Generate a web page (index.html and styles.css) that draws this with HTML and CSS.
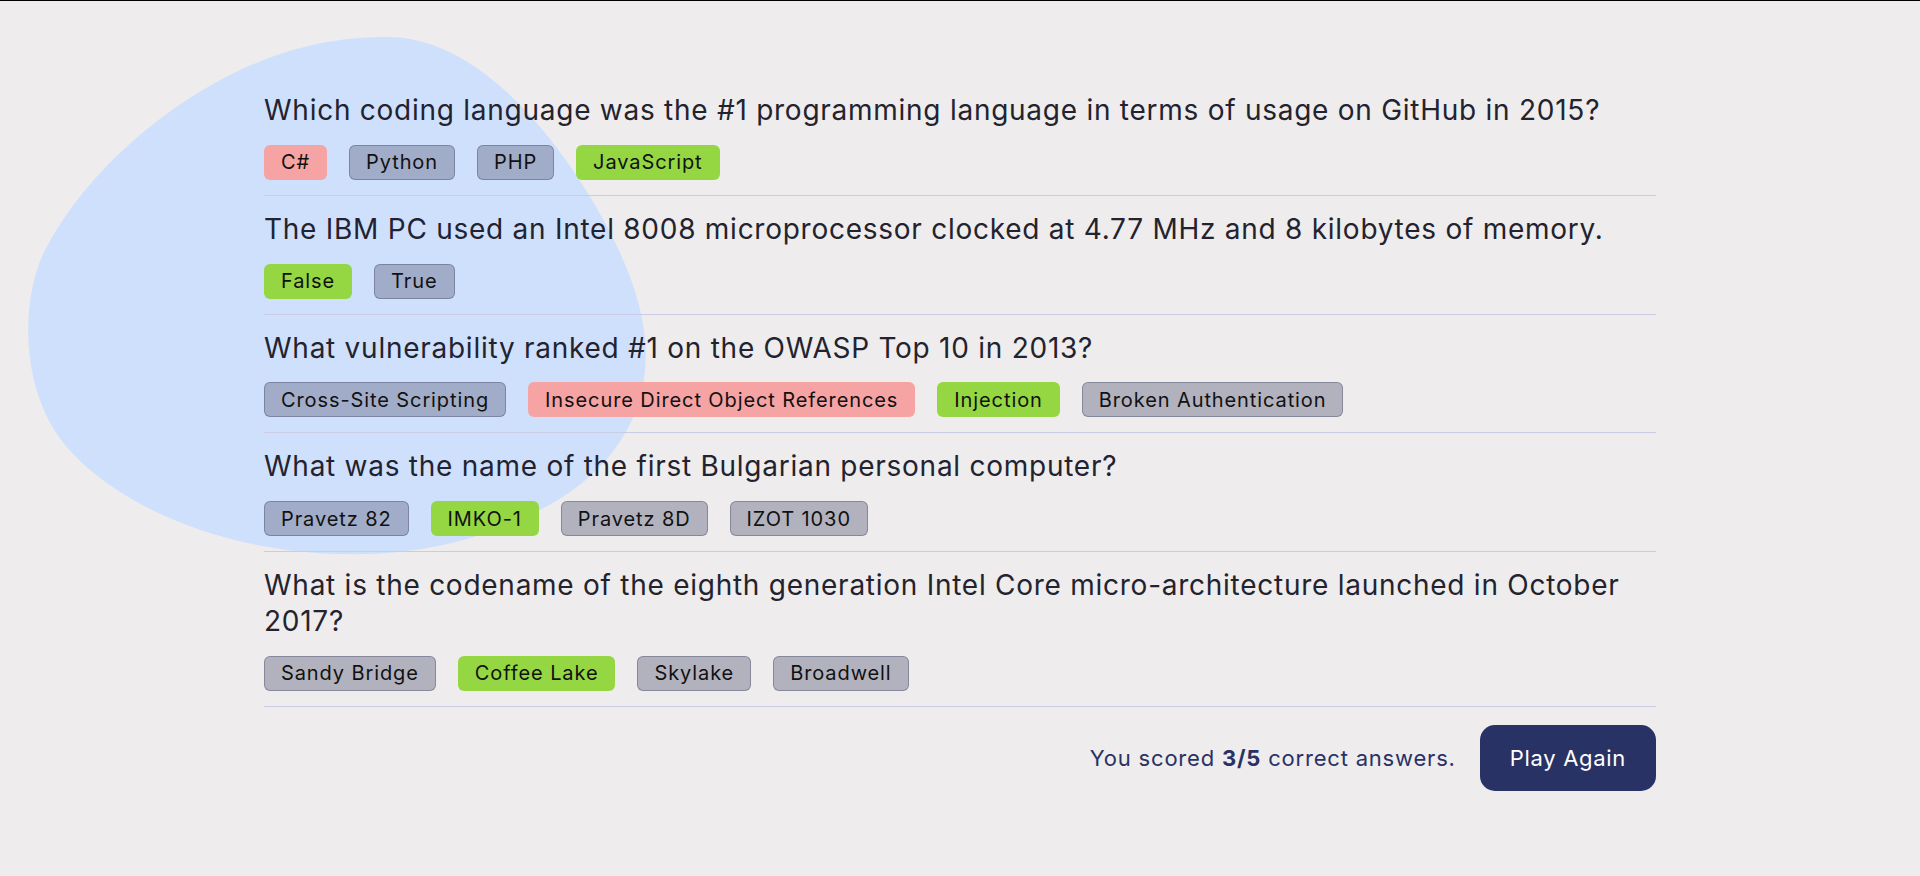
FILE: index.html
```html
<!DOCTYPE html>
<html lang="en">
<head>
<meta charset="utf-8">
<title>Quizzical</title>
<link rel="stylesheet" href="styles.css">
</head>
<body>
<svg class="blob" width="700" height="600" viewBox="0 0 700 600" aria-hidden="true">
  <path d="M388 37 C470 37 545 120 595 205 C630 265 650 320 645 370 C640 430 600 480 540 510 C480 540 420 556 340 554 C230 552 120 510 65 445 C20 390 20 300 45 250 C90 165 170 105 230 75 C290 45 340 37 388 37 Z" fill="#CFE0FD"/>
</svg>
<main class="quiz">
  <section class="question">
    <h2 class="q-text">Which coding language was the #1 programming language in terms of usage on GitHub in 2015?</h2>
    <div class="answers">
      <span class="answer wrong">C#</span>
      <span class="answer neutral">Python</span>
      <span class="answer neutral">PHP</span>
      <span class="answer correct">JavaScript</span>
    </div>
  </section>
  <section class="question">
    <h2 class="q-text">The IBM PC used an Intel 8008 microprocessor clocked at 4.77 MHz and 8 kilobytes of memory.</h2>
    <div class="answers">
      <span class="answer correct">False</span>
      <span class="answer neutral">True</span>
    </div>
  </section>
  <section class="question">
    <h2 class="q-text">What vulnerability ranked #1 on the OWASP Top 10 in 2013?</h2>
    <div class="answers">
      <span class="answer neutral">Cross-Site Scripting</span>
      <span class="answer wrong">Insecure Direct Object References</span>
      <span class="answer correct">Injection</span>
      <span class="answer neutral">Broken Authentication</span>
    </div>
  </section>
  <section class="question">
    <h2 class="q-text">What was the name of the first Bulgarian personal computer?</h2>
    <div class="answers">
      <span class="answer neutral">Pravetz 82</span>
      <span class="answer correct">IMKO-1</span>
      <span class="answer neutral">Pravetz 8D</span>
      <span class="answer neutral">IZOT 1030</span>
    </div>
  </section>
  <section class="question">
    <h2 class="q-text">What is the codename of the eighth generation Intel Core micro-architecture launched in October 2017?</h2>
    <div class="answers">
      <span class="answer neutral">Sandy Bridge</span>
      <span class="answer correct">Coffee Lake</span>
      <span class="answer neutral">Skylake</span>
      <span class="answer neutral">Broadwell</span>
    </div>
  </section>
  <div class="result">
    <p class="score">You scored <strong>3/5</strong> correct answers.</p>
    <button class="play-again" type="button">Play Again</button>
  </div>
</main>
</body>
</html>
```
FILE: styles.css
```css
* { box-sizing: border-box; }

html, body {
  margin: 0;
  padding: 0;
}

body {
  position: relative;
  min-height: 100vh;
  background: #EEECEC;
  border-top: 1px solid #000;
  font-family: "Inter", "Noto Sans", sans-serif;
  color: #23232F;
  overflow: hidden;
}

.blob {
  position: absolute;
  left: 0;
  top: -1px;
  z-index: 0;
}

.quiz {
  position: relative;
  z-index: 1;
  width: 1392px;
  margin: 0 auto;
  padding-top: 76px;
}

.question {
  padding: 16px 0 15px;
  border-bottom: 1px solid #C9CCE3;
}

.q-text {
  margin: 0 0 16px;
  font-size: 28px;
  line-height: 35.8px;
  letter-spacing: 0.74px;
  font-weight: 400;
  color: #23232F;
}

.answers {
  display: flex;
  flex-wrap: wrap;
  gap: 22px;
}

.answer {
  display: inline-flex;
  align-items: center;
  height: 35px;
  padding: 0 16px;
  border: 1px solid transparent;
  border-radius: 6px;
  font-size: 20px;
  letter-spacing: 0.9px;
  color: #111;
}

.answer.neutral {
  background: rgba(105, 108, 135, 0.45);
  border-color: rgba(80, 84, 110, 0.45);
}

.answer.wrong {
  background: #F5A3A3;
}

.answer.correct {
  background: #94D743;
}

.result {
  display: flex;
  justify-content: flex-end;
  align-items: center;
  gap: 24px;
  margin-top: 18px;
}

.score {
  margin: 0;
  font-size: 22px;
  letter-spacing: 0.8px;
  color: #293264;
}

.score strong {
  font-weight: 700;
}

.play-again {
  height: 66px;
  padding: 0 30px;
  border: 0;
  border-radius: 15px;
  background: #293264;
  color: #fff;
  font-family: inherit;
  font-size: 22px;
  letter-spacing: 0.7px;
  cursor: pointer;
}
```
